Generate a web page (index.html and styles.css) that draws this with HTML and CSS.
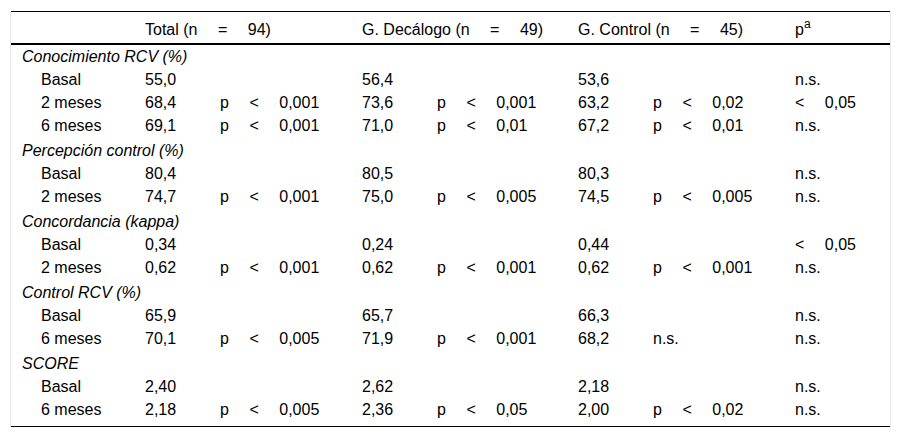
FILE: index.html
```html
<!DOCTYPE html>
<html lang="es">
<head>
<meta charset="utf-8">
<title>Tabla</title>
<link rel="stylesheet" href="styles.css">
</head>
<body>
<div class="wrap">
<table class="t">
<colgroup>
<col class="c-label"><col class="c-val"><col class="c-p"><col class="c-val"><col class="c-p2"><col class="c-val"><col class="c-p"><col class="c-last">
</colgroup>
<thead>
<tr>
<th></th>
<th colspan="2"><span class="sp"><span>Total (n</span><span>=</span><span>94)</span></span></th>
<th colspan="2"><span class="sp"><span>G. Decálogo (n</span><span>=</span><span>49)</span></span></th>
<th colspan="2"><span class="sp"><span>G. Control (n</span><span>=</span><span>45)</span></span></th>
<th>p<sup>a</sup></th>
</tr>
</thead>
<tbody>
<tr class="cat first"><td colspan="8">Conocimiento RCV (%)</td></tr>
<tr><td class="lbl">Basal</td><td>55,0</td><td></td><td>56,4</td><td></td><td>53,6</td><td></td><td>n.s.</td></tr>
<tr><td class="lbl">2 meses</td><td>68,4</td><td><span class="sp"><span>p</span><span>&lt;</span><span>0,001</span></span></td><td>73,6</td><td><span class="sp"><span>p</span><span>&lt;</span><span>0,001</span></span></td><td>63,2</td><td><span class="sp"><span>p</span><span>&lt;</span><span>0,02</span></span></td><td><span class="sp"><span>&lt;</span><span>0,05</span></span></td></tr>
<tr><td class="lbl">6 meses</td><td>69,1</td><td><span class="sp"><span>p</span><span>&lt;</span><span>0,001</span></span></td><td>71,0</td><td><span class="sp"><span>p</span><span>&lt;</span><span>0,01</span></span></td><td>67,2</td><td><span class="sp"><span>p</span><span>&lt;</span><span>0,01</span></span></td><td>n.s.</td></tr>

<tr class="cat"><td colspan="8">Percepción control (%)</td></tr>
<tr><td class="lbl">Basal</td><td>80,4</td><td></td><td>80,5</td><td></td><td>80,3</td><td></td><td>n.s.</td></tr>
<tr><td class="lbl">2 meses</td><td>74,7</td><td><span class="sp"><span>p</span><span>&lt;</span><span>0,001</span></span></td><td>75,0</td><td><span class="sp"><span>p</span><span>&lt;</span><span>0,005</span></span></td><td>74,5</td><td><span class="sp"><span>p</span><span>&lt;</span><span>0,005</span></span></td><td>n.s.</td></tr>

<tr class="cat"><td colspan="8">Concordancia (kappa)</td></tr>
<tr><td class="lbl">Basal</td><td>0,34</td><td></td><td>0,24</td><td></td><td>0,44</td><td></td><td><span class="sp"><span>&lt;</span><span>0,05</span></span></td></tr>
<tr><td class="lbl">2 meses</td><td>0,62</td><td><span class="sp"><span>p</span><span>&lt;</span><span>0,001</span></span></td><td>0,62</td><td><span class="sp"><span>p</span><span>&lt;</span><span>0,001</span></span></td><td>0,62</td><td><span class="sp"><span>p</span><span>&lt;</span><span>0,001</span></span></td><td>n.s.</td></tr>

<tr class="cat"><td colspan="8">Control RCV (%)</td></tr>
<tr><td class="lbl">Basal</td><td>65,9</td><td></td><td>65,7</td><td></td><td>66,3</td><td></td><td>n.s.</td></tr>
<tr><td class="lbl">6 meses</td><td>70,1</td><td><span class="sp"><span>p</span><span>&lt;</span><span>0,005</span></span></td><td>71,9</td><td><span class="sp"><span>p</span><span>&lt;</span><span>0,001</span></span></td><td>68,2</td><td>n.s.</td><td>n.s.</td></tr>

<tr class="cat"><td colspan="8">SCORE</td></tr>
<tr><td class="lbl">Basal</td><td>2,40</td><td></td><td>2,62</td><td></td><td>2,18</td><td></td><td>n.s.</td></tr>
<tr class="last"><td class="lbl">6 meses</td><td>2,18</td><td><span class="sp"><span>p</span><span>&lt;</span><span>0,005</span></span></td><td>2,36</td><td><span class="sp"><span>p</span><span>&lt;</span><span>0,05</span></span></td><td>2,00</td><td><span class="sp"><span>p</span><span>&lt;</span><span>0,02</span></span></td><td>n.s.</td></tr>
</tbody>
</table>
</div>
</body>
</html>
```
FILE: styles.css
```css
html, body {
  margin: 0;
  padding: 0;
  background: #fff;
}
body {
  font-family: "Liberation Sans", Arial, sans-serif;
  font-size: 16px;
  color: #000;
}
.wrap {
  margin: 11px 0 0 10px;
  width: 881px;
  box-sizing: border-box;
  border-left: 1px solid #e6e6e6;
  border-right: 1px solid #e6e6e6;
}
.t {
  width: 879px;
  table-layout: fixed;
  border-collapse: separate;
  border-spacing: 0;
  border-top: 1px solid #000;
  border-bottom: 1px solid #000;
}
.c-label { width: 134px; }
.c-val { width: 75px; }
.c-p { width: 142px; }
.c-p2 { width: 141px; }
.c-last { width: 95px; }
.t th, .t td {
  padding: 0;
  line-height: 23px;
  text-align: left;
  vertical-align: top;
  white-space: nowrap;
  font-weight: normal;
}
.t thead th {
  padding: 6px 0 2px;
  border-bottom: 2px solid #000;
}
.t sup {
  font-size: 12px;
  line-height: 0;
  vertical-align: 7px;
}
.sp {
  display: inline-flex;
  gap: 20.5px;
}
.t .cat td {
  padding: 2px 0 0 11px;
  font-style: italic;
}
.t .cat.first td {
  padding-top: 0;
}
.t td.lbl {
  padding-left: 30px;
}
.t .last td {
  padding-bottom: 5px;
}
```
